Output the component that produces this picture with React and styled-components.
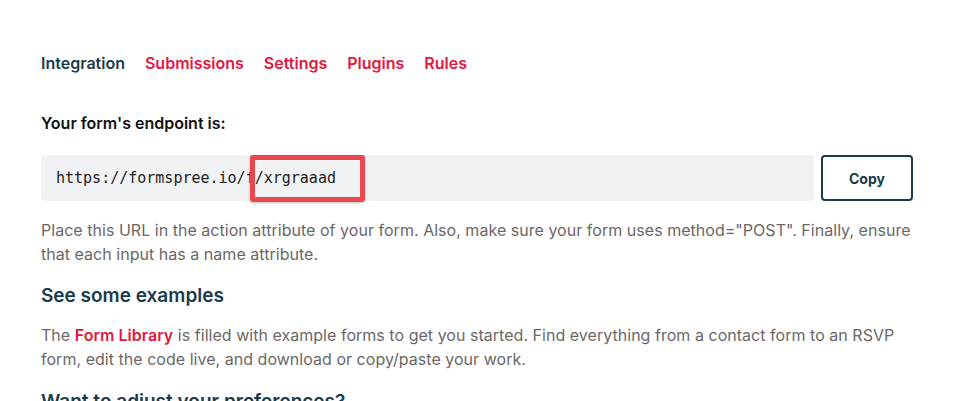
import React from "react";
import styled, { createGlobalStyle } from "styled-components";

const Global = createGlobalStyle`
	body {
		margin: 0;
		background: #fff;
		font-family: Inter, "Noto Sans", sans-serif;
		-webkit-font-smoothing: antialiased;
	}
`;

const Page = styled.main`
	width: 913px;
	padding: 52px 0 0 41px;
	height: 401px;
	box-sizing: border-box;
	overflow: hidden;
`;

const Tabs = styled.nav`
	display: flex;
	gap: 20px;
	font-size: 16px;
	font-weight: 600;
	line-height: 22px;
`;

const Tab = styled.a`
	color: ${(p) => (p.active ? "#1b3a4b" : "#e5173f")};
	text-decoration: none;
	cursor: pointer;
`;

const Label = styled.h3`
	margin: 38px 0 0;
	font-size: 16px;
	font-weight: 600;
	line-height: 22px;
	color: #111;
`;

const EndpointRow = styled.div`
	display: flex;
	gap: 7px;
	margin-top: 21px;
	height: 46px;
`;

const UrlBox = styled.div`
	position: relative;
	flex: 1;
	display: flex;
	align-items: center;
	padding: 0 15px;
	background: #f1f2f4;
	border-radius: 4px;
	font-family: "DejaVu Sans Mono", "Liberation Mono", monospace;
	font-size: 15px;
	color: #222;
`;

const Highlight = styled.span`
	position: absolute;
	left: 209px;
	top: 0;
	width: 115px;
	height: 47px;
	box-sizing: border-box;
	border: 5px solid #e8474f;
	border-radius: 3px;
	box-shadow: 0 1px 3px rgba(0, 0, 0, 0.25);
`;

const CopyButton = styled.button`
	width: 92px;
	background: #fff;
	border: 2px solid #1b3a4b;
	border-radius: 4px;
	font-family: Inter, sans-serif;
	font-size: 14px;
	font-weight: 700;
	color: #1b3a4b;
	cursor: pointer;
`;

const Text = styled.p`
	margin: ${(p) => p.mt || "17px"} 0 0;
	font-size: 16px;
	line-height: 24px;
	letter-spacing: 0.03px;
	color: #6b6867;
`;

const LinkText = styled.a`
	color: #e5173f;
	font-weight: 600;
	text-decoration: none;
`;

const Heading = styled.h2`
	margin: ${(p) => p.mt || "17px"} 0 0;
	font-size: 19px;
	font-weight: 600;
	line-height: 26px;
	color: #1b3a4b;
`;

export default function App() {
	return (
		<Page>
			<Global />
			<Tabs>
				<Tab active>Integration</Tab>
				<Tab>Submissions</Tab>
				<Tab>Settings</Tab>
				<Tab>Plugins</Tab>
				<Tab>Rules</Tab>
			</Tabs>
			<Label>Your form's endpoint is:</Label>
			<EndpointRow>
				<UrlBox>
					https://formspree.io/f/xrgraaad
					<Highlight />
				</UrlBox>
				<CopyButton>Copy</CopyButton>
			</EndpointRow>
			<Text>
				Place this URL in the action attribute of your form. Also, make sure your form
				uses method="POST". Finally, ensure that each input has a name attribute.
			</Text>
			<Heading>See some examples</Heading>
			<Text mt="14px">
				The <LinkText>Form Library</LinkText> is filled with example forms to get you
				started. Find everything from a contact form to an RSVP form, edit the code live,
				and download or copy/paste your work.
			</Text>
			<Heading mt="18px">Want to adjust your preferences?</Heading>
		</Page>
	);
}
